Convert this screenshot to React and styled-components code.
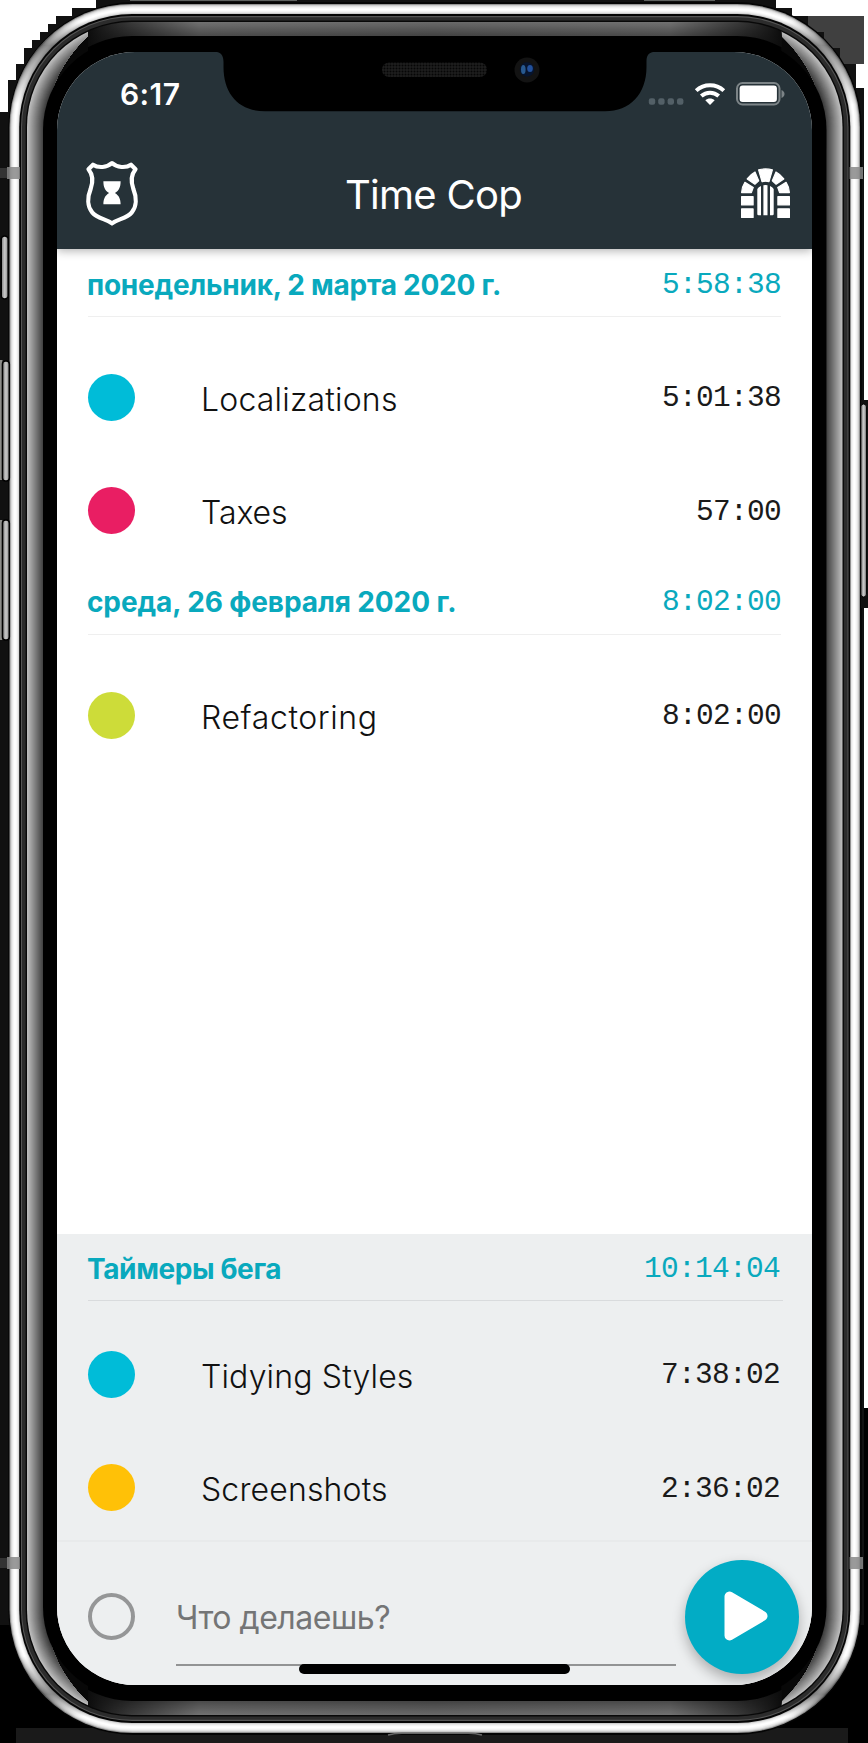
import React from 'react';
import styled, { createGlobalStyle } from 'styled-components';

const GlobalStyle = createGlobalStyle`
  * { box-sizing: border-box; }
  body { margin: 0; background: #fff; }
`;

const sans = '"Inter", "Liberation Sans", sans-serif';
const mono = '"Liberation Mono", monospace';

const Stage = styled.main`
  position: relative;
  display: flow-root;
  width: 868px;
  height: 1743px;
  overflow: hidden;
  font-family: ${sans};
`;

const HardwareArt = styled.svg`
  position: absolute;
  inset: 0;
`;

const Screen = styled.div`
  position: relative;
  display: flex;
  flex-direction: column;
  width: 755px;
  height: 1633px;
  margin: 52px 0 0 57px;
  border-radius: 78px;
  overflow: hidden;
  background: #fff;
`;

const Header = styled.header`
  position: relative;
  z-index: 1;
  height: 197px;
  flex: none;
  background: #263238;
  color: #fff;
  box-shadow: 0 2px 9px rgba(0, 0, 0, 0.3);
`;

const StatusBar = styled.div`
  display: flex;
  align-items: center;
  justify-content: space-between;
  height: 84px;
  padding: 0 26px 0 63px;
`;

const Clock = styled.span`
  font-size: 30px;
  font-weight: 600;
  letter-spacing: 0.4px;
`;

const StatusIcons = styled.div`
  display: flex;
  align-items: center;
  gap: 10px;
`;

const AppBar = styled.div`
  display: flex;
  align-items: center;
  justify-content: space-between;
  height: 114px;
  padding: 0 22px 0 28px;
`;

const Title = styled.h1`
  margin: 4px 13px 0 0;
  font-size: 40px;
  line-height: 50px;
  font-weight: 400;
  letter-spacing: -0.7px;
`;

const Notch = styled.svg`
  position: absolute;
  z-index: 2;
  left: 158px;
  top: 0;
`;

const TimerList = styled.section`
  flex: 1;
  padding-top: 0.5px;
`;

const RunningPanel = styled.section`
  flex: none;
  height: 451.5px;
  background: #edeff0;
`;

const Group = styled.div`
  padding: 0 ${p => p.$inset}px 0 31px;
`;

const GroupHeading = styled.div`
  display: flex;
  justify-content: space-between;
  height: 67.5px;
  margin-bottom: ${p => p.$gap}px;
  padding-right: ${p => p.$endPad || 0}px;
  border-bottom: 1px solid ${p => p.$line};
  color: #09a9bd;
`;

const GroupName = styled.h2`
  margin: 18px 0 0 -1px;
  font-size: 28px;
  line-height: 34px;
  font-weight: 700;
  white-space: nowrap;
  letter-spacing: ${p => p.$spacing}px;
`;

const Duration = styled.span`
  font-family: ${mono};
  font-size: 29.5px;
  line-height: 36px;
  letter-spacing: -0.7px;
  margin-top: ${p => p.$top || 0}px;
  padding-right: ${p => p.$endPad || 0}px;
`;

const TimerRow = styled.div`
  display: flex;
  align-items: center;
  height: 113.3px;
  color: #1a1a1a;
`;

const Dot = styled.span`
  flex: none;
  width: 47px;
  height: 47px;
  border-radius: 50%;
  background: ${p => p.$color};
`;

const TimerName = styled.span`
  flex: 1;
  margin: 5px 0 0 66px;
  font-size: 32px;
  font-weight: 350;
  line-height: 40px;
  color: #111;
  letter-spacing: ${p => p.$spacing}px;
`;

const Composer = styled.div`
  display: flex;
  height: 144px;
  margin-top: -4px;
  padding: 0 13px 0 31px;
  border-top: 2px solid #e8eaeb;
`;

const EmptyDot = styled.span`
  flex: none;
  width: 47px;
  height: 47px;
  margin-top: 51px;
  border: 4.5px solid #959697;
  border-radius: 50%;
`;

const Prompt = styled.div`
  width: 500px;
  height: 124px;
  margin-left: 41px;
  padding-top: 56px;
  border-bottom: 2px solid #929394;
  color: #747576;
  font-size: 32px;
  line-height: 40px;
  letter-spacing: -0.48px;
`;

const PlayButton = styled.button`
  display: flex;
  align-items: center;
  justify-content: center;
  width: 114px;
  height: 114px;
  margin: 18px 0 0 auto;
  padding: 0 0 3px 8px;
  border: 0;
  border-radius: 50%;
  background: #02acc5;
  box-shadow: 0 6px 13px rgba(0, 0, 0, 0.28);
`;

const HomeIndicator = styled.div`
  position: absolute;
  left: 242px;
  top: 1612px;
  width: 271px;
  height: 10px;
  border-radius: 5px;
  background: #000;
`;

const history = [
  {
    name: 'понедельник, 2 марта 2020 г.', spacing: -0.25, total: '5:58:38',
    timers: [
      { name: 'Localizations', color: '#00bcd8', time: '5:01:38', spacing: 0.2 },
      { name: 'Taxes', color: '#e91e63', time: '57:00', spacing: -0.1 },
    ],
  },
  {
    name: 'среда, 26 февраля 2020 г.', spacing: -0.1, total: '8:02:00',
    timers: [{ name: 'Refactoring', color: '#cddc39', time: '8:02:00', spacing: 0.6 }],
  },
];

const running = {
  name: 'Таймеры бега', spacing: -0.4, total: '10:14:04',
  timers: [
    { name: 'Tidying Styles', color: '#00bcd8', time: '7:38:02', spacing: 0.15 },
    { name: 'Screenshots', color: '#ffc107', time: '2:36:02', spacing: 0.15 },
  ],
};

function TimerGroup({ group, inset = 31, gap = 23.8, endPad, line = '#efefef' }) {
  return (
    <Group $inset={inset}>
      <GroupHeading $gap={gap} $endPad={endPad} $line={line}>
        <GroupName $spacing={group.spacing}>{group.name}</GroupName>
        <Duration $top={17}>{group.total}</Duration>
      </GroupHeading>
      {group.timers.map(t => (
        <TimerRow key={t.name}>
          <Dot $color={t.color} />
          <TimerName $spacing={t.spacing}>{t.name}</TimerName>
          <Duration $top={2} $endPad={endPad}>{t.time}</Duration>
        </TimerRow>
      ))}
    </Group>
  );
}

/* Solid silhouette of the phone body, inset evenly; stacking them builds the rim. */
function Layer({ x, y, r, ...rest }) {
  return <rect x={x} y={y} width={869.5 - 2 * x} height={1737 - 2 * y} rx={r} {...rest} />;
}

const gray = v => `rgb(${v},${v},${v})`;
const chrome = [150, 205, 228, 242, 250, 255, 252, 243, 230, 205];
const bezel = Array.from({ length: 17 }, (_, i) => i);
const mirror = 'translate(869.5 0) scale(-1 1)';
const sideShape = 'M0 0H88V36C62 60 43 95 43 150V1588C43 1643 62 1678 88 1702V1743H0Z';

function Hardware() {
  return (
    <HardwareArt width="868" height="1743" viewBox="0 0 868 1743">
      <defs>
        <linearGradient id="chrome-shade" gradientUnits="userSpaceOnUse" x1="0" y1="0" x2="0" y2="1743">
          <stop offset="0.012" stopColor="#000" stopOpacity="0" />
          <stop offset="0.026" stopColor="#000" stopOpacity="0.45" />
          <stop offset="0.06" stopColor="#000" stopOpacity="0" />
          <stop offset="0.95" stopColor="#000" stopOpacity="0" />
          <stop offset="0.972" stopColor="#000" stopOpacity="0.45" />
          <stop offset="0.985" stopColor="#000" stopOpacity="0" />
        </linearGradient>
        {bezel.map(i => {
          const v = Math.round(112 - i * 2.8);
          return (
            <linearGradient key={i} id={`edge${i}`} gradientUnits="userSpaceOnUse" x1="88" y1="0" x2="781.5" y2="0">
              <stop offset="0" stopColor="#0c0c0c" />
              <stop offset="0.06" stopColor={gray(Math.round(v * 0.5))} />
              <stop offset="0.16" stopColor={gray(v)} />
              <stop offset="0.5" stopColor={gray(v - 8)} />
              <stop offset="0.84" stopColor={gray(v)} />
              <stop offset="0.94" stopColor={gray(Math.round(v * 0.5))} />
              <stop offset="1" stopColor="#0c0c0c" />
            </linearGradient>
          );
        })}
        <clipPath id="side-bezel">
          <path d={sideShape} />
          <path transform={mirror} d={sideShape} />
        </clipPath>
        <clipPath id="end-bezel">
          <path d="M88 0H781.5V60H88ZM88 1680H781.5V1743H88Z" />
        </clipPath>
        <pattern id="mesh" width="3" height="3" patternUnits="userSpaceOnUse">
          <rect width="3" height="3" fill="#1d1d1d" />
          <circle cx="1.5" cy="1.5" r="1" fill="#060606" />
        </pattern>
        <linearGradient id="key" x1="0" x2="1" y1="0" y2="0">
          <stop offset="0" stopColor="#777" />
          <stop offset="0.5" stopColor="#c9c9c9" />
          <stop offset="1" stopColor="#888" />
        </linearGradient>
      </defs>

      <path fill="#111" d="M0 112H8V80H16V64H24V48H32V40H40V32H48V24H56V16H72V8H96V0H776V8H792V16H808V24H864V1743H0Z" />
      <path fill="#404040" d="M808 16H864V64H840V48H824V32H808Z" />
      <path fill="#fff" d="M856 64H868V88H856Z" />
      <path fill="#000" d="M864 1408H868V1743H864ZM0 1625H120V1743H0ZM750 1625H868V1743H750Z" />
      <path fill="#1a1a1a" d="M16 1728H848V1743H16Z" />
      <path fill="#5f6260" d="M130 0H297V1H130ZM644 0H715V1H644Z" />

      <rect x="8.3" y="2" width="853.5" height="1733" rx="126" fill="#050505" />
      {chrome.map((v, i) => (
        <Layer key={i} x={9.5 + i} y={4 + i} r={123 - i} fill={gray(v)} />
      ))}
      <Layer x={9.5} y={4} r={123} fill="url(#chrome-shade)" />
      <Layer x={19.2} y={14} r={113} fill="#050505" />
      <Layer x={21} y={16} r={111} fill="#555" />
      <Layer x={22} y={17.2} r={110} fill="#2c2c2c" />
      <Layer x={25.6} y={20.6} r={106.4} fill="#080808" />
      <g clipPath="url(#side-bezel)">
        {bezel.map(i => (
          <Layer key={i} x={27 + i} y={22 + i} r={105 - i} fill={gray(188 - i * 8)} />
        ))}
      </g>
      <g clipPath="url(#end-bezel)">
        {bezel.slice(0, 14).map(i => (
          <Layer key={i} x={27 + i} y={22 + i} r={105 - i} fill={`url(#edge${i})`} />
        ))}
        <Layer x={41} y={36} r={91} fill="#000" />
      </g>
      <Layer x={43} y={38} r={92} fill="#000" />

      <path fill="#888" fillOpacity="0.85" d="M7 167H20V179H7ZM849.5 167H863V179H849.5ZM7 1557H20V1569H7ZM849.5 1557H863V1569H849.5Z" />
      <path fill="#333" d="M0 168H7V178H0ZM0 1558H7V1568H0Z" />

      <path fill="#8d8d8a" d="M0 360H2.5V480H0ZM0 520H2.5V640H0Z" />
      <g fill="url(#key)" stroke="#000" strokeWidth="1.6">
        <rect x="1.2" y="236" width="7" height="63" rx="3.5" />
        <rect x="2.5" y="361" width="6.8" height="120" rx="3" />
        <rect x="2.5" y="520" width="6.8" height="120" rx="3" />
      </g>
      <path fill="#111" d="M861 400H868V608H861Z" />
      <rect x="860.8" y="404" width="5.6" height="193" rx="2.8" fill="url(#key)" stroke="#000" strokeWidth="1" />
      <path d="M388 1735Q394 1733.3 402 1733.3H468Q476 1733.3 482 1735" fill="none" stroke="#686868" strokeWidth="1.5" />
    </HardwareArt>
  );
}

function NotchArt() {
  return (
    <Notch width="440" height="62" viewBox="0 0 440 62">
      <path d="M2 0C7 1 8.500 5 8.500 10V15C8.500 42 24 59.300 50 59.300H390C415 59.300 431.500 42 431.500 15V10C431.500 4 433 1 438 0Z" fill="#000" />
      <rect x="167" y="10.500" width="105" height="14.500" rx="7.200" fill="url(#mesh)" />
      <circle cx="312" cy="18" r="12.500" fill="#131313" />
      <circle cx="312" cy="17.500" r="7.200" fill="#07142d" />
      <ellipse cx="308.300" cy="17.500" rx="2.300" ry="4.500" fill="#28598f" />
      <ellipse cx="315" cy="16.500" rx="2.800" ry="3.600" fill="#22509a" />
    </Notch>
  );
}

function SignalIcon() {
  return (
    <svg width="36" height="24" viewBox="0 0 36 24" fill="#536067">
      {[4, 13.4, 22.8, 32.2].map(x => <rect key={x} x={x - 3.2} y="16.300" width="6.400" height="6.400" rx="2.200" />)}
    </svg>
  );
}

function WifiIcon() {
  return (
    <svg width="32" height="24" viewBox="0 0 32 24">
      <g fill="none" stroke="#fff" strokeWidth="4">
        <path d="M2.200 8.600C10 1.400 22 1.400 29.800 8.600" />
        <path d="M7.300 14C12.300 9.500 19.700 9.500 24.700 14" />
      </g>
      <path d="M11.300 18.200C14 15.900 18 15.900 20.700 18.200L16 23Z" fill="#fff" />
    </svg>
  );
}

function BatteryIcon() {
  return (
    <svg width="50" height="24" viewBox="0 0 50 24">
      <rect x="1" y="1" width="42.500" height="21.500" rx="5.500" fill="none" stroke="#7c8487" strokeWidth="2" />
      <rect x="3.600" y="3.600" width="37.300" height="16.300" rx="3" fill="#fff" />
      <path d="M45.500 8C49.500 9.500 49.500 14.500 45.500 16Z" fill="#7c8487" />
    </svg>
  );
}

function ShieldIcon() {
  return (
    <svg width="54" height="67" viewBox="0 0 51.400 65" preserveAspectRatio="none">
      <path d="M25.700 3C21 7.500 12.500 8 7.600 4.600L3.300 9C8.500 15.500 7.500 22 5.400 28C2.200 36 2 45 7 51C12 57 20 57 25.700 61.500C31.400 57 39.400 57 44.400 51C49.400 45 49.200 36 46 28C43.900 22 42.900 15.500 48.100 9L43.800 4.600C38.900 8 30.400 7.500 25.700 3Z" fill="none" stroke="#fff" strokeWidth="4" strokeLinejoin="round" />
      <path d="M17.500 20.500H33.900C33.900 26 32.500 29.500 28.500 32C32.500 34.500 33.900 38 33.900 43H17.500C17.500 38 18.900 34.500 22.900 32C18.900 29.500 17.500 26 17.500 20.500Z" fill="#fff" />
    </svg>
  );
}

function GateIcon() {
  const side = (
    <>
      <rect x="0.600" y="40.900" width="11.500" height="8.500" />
      <rect x="0.600" y="28.700" width="11.500" height="8.200" />
      <path d="M3.900 14.300L12.300 19.400L10.400 24.600H0.600Q0.800 19 3.900 14.300Z" />
      <path d="M6.200 10.900Q9.500 6.300 14 4L17.700 12.800L13.900 16.200Z" />
    </>
  );
  return (
    <svg width="49" height="50" viewBox="0 0 49 50" fill="#fff" stroke="#fff" strokeWidth="1.200" strokeLinejoin="round">
      {side}
      <g transform="translate(49 0) scale(-1 1)">{side}</g>
      <path d="M17.600 1.900Q24.500 0 31.400 1.900L28 13.700Q24.500 12.800 21 13.700Z" />
      <path stroke="none" d="M16.300 21Q17.500 19 20 18V47.300H17.500Q16.300 47.300 16.300 46ZM22.400 17.200Q24.500 16.600 26.500 17.200V47.300H22.400ZM29 18Q31.500 19 32.700 21V46Q32.700 47.300 31.500 47.300H29Z" />
    </svg>
  );
}

export default function App() {
  return (
    <>
      <GlobalStyle />
      <Stage>
        <Hardware />
        <Screen>
          <Header>
            <StatusBar>
              <Clock>6:17</Clock>
              <StatusIcons>
                <SignalIcon />
                <WifiIcon />
                <BatteryIcon />
              </StatusIcons>
            </StatusBar>
            <AppBar>
              <ShieldIcon />
              <Title>Time Cop</Title>
              <GateIcon />
            </AppBar>
          </Header>
          <NotchArt />
          <TimerList>
            {history.map(g => <TimerGroup key={g.name} group={g} />)}
          </TimerList>
          <RunningPanel>
            <TimerGroup group={running} inset={29} gap={16.8} endPad={3} line="#d9dbdd" />
            <Composer>
              <EmptyDot />
              <Prompt>Что делаешь?</Prompt>
              <PlayButton aria-label="Start">
                <svg width="44" height="50" viewBox="0 0 44 50">
                  <path d="M5.500 5.500V44.500L38.500 25Z" fill="#fff" stroke="#fff" strokeWidth="10" strokeLinejoin="round" />
                </svg>
              </PlayButton>
            </Composer>
          </RunningPanel>
          <HomeIndicator />
        </Screen>
      </Stage>
    </>
  );
}
